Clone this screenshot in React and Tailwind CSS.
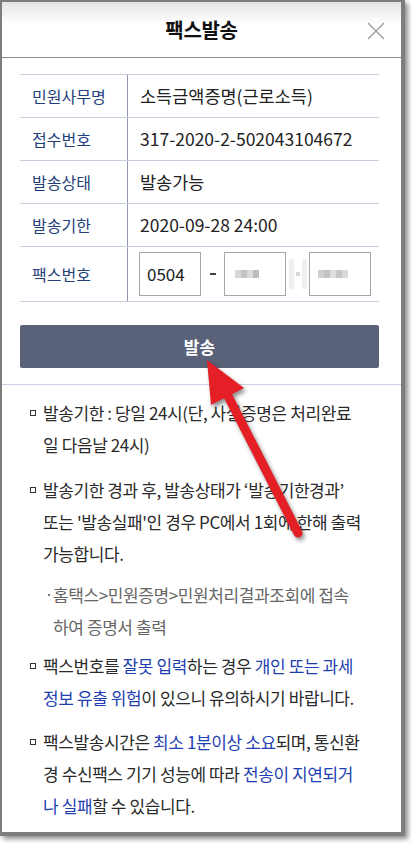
import React from 'react';

const font = { fontFamily: '"Noto Sans CJK KR", "Noto Sans", sans-serif' };

const rows = [
  { label: '민원사무명', value: '소득금액증명(근로소득)' },
  { label: '접수번호', value: '317-2020-2-502043104672' },
  { label: '발송상태', value: '발송가능' },
  { label: '발송기한', value: '2020-09-28 24:00' },
];

// pixelated blur in the masked fax fields
const Mosaic = ({ cells }) => (
  <div className="flex items-center">
    {cells.map((c, i) => (
      <div key={i} className="w-[6px] h-[8px]" style={{ background: c }} />
    ))}
  </div>
);

const Bullet = () => (
  <span className="absolute left-0 top-[13px] w-[6px] h-[6px] border-[1.5px] border-[#333]" />
);

const Blue = ({ children }) => <span className="text-[#1f3fb0]">{children}</span>;

export default function App() {
  return (
    <div className="relative w-[412px] h-[843px] bg-white overflow-hidden" style={font}>
      <div className="w-[405px] h-[836px] border-t-2 border-l-2 border-r-4 border-b-4 border-[#7d7d7d] bg-white shadow-[3px_3px_5px_rgba(0,0,0,0.45)] flex flex-col">
        {/* header */}
        <div className="relative h-[56px] shrink-0 border-b border-[#8a8a8a] bg-gradient-to-b from-[#e4e4e4] to-white to-40% flex items-center justify-center">
          <h1 className="text-[20px] font-bold text-[#111] tracking-[-0.3px]">팩스발송</h1>
          <svg className="absolute left-[365px] top-[20px]" width="18" height="18" viewBox="0 0 18 18">
            <path d="M1 1 L17 17 M17 1 L1 17" stroke="#9a9a9a" strokeWidth="1.3" />
          </svg>
        </div>

        {/* table */}
        <div className="pl-[18px] pt-[16px]">
          <div className="w-[359px] border-t border-[#c8d0e0]">
            {rows.map((r) => (
              <div key={r.label} className="flex h-[43px] border-b border-[#c8d0e0]">
                <div className="w-[108px] shrink-0 border-r border-[#8f97aa] pl-[12px] flex items-center text-[16px] text-[#24407a]">
                  {r.label}
                </div>
                <div className="pl-[12px] flex items-center text-[17.5px] text-[#222]">{r.value}</div>
              </div>
            ))}
            <div className="flex h-[55px] border-b border-[#c8d0e0]">
              <div className="w-[108px] shrink-0 border-r border-[#8f97aa] pl-[12px] flex items-center text-[16px] text-[#24407a]">
                팩스번호
              </div>
              <div className="pl-[11px] flex items-center">
                <div className="w-[62px] h-[44px] border border-[#a6a6ae] flex items-center pl-[7px] text-[17px] text-[#222]">
                  0504
                </div>
                <div className="w-[23px] flex justify-center">
                  <div className="w-[6px] h-[1.5px] bg-[#444]" />
                </div>
                <div className="w-[62px] h-[44px] border border-[#a6a6ae] flex items-center pl-[10px]">
                  <Mosaic cells={['#d6d6d6', '#c4c4c4', '#dadada', '#bdbdbd']} />
                </div>
                <div className="w-[23px] flex justify-center items-center gap-[2px]">
                  <div className="w-[5px] h-[30px] bg-[#f0f0f0]" />
                  <div className="w-[4px] h-[4px] bg-[#d8d8d8]" />
                  <div className="w-[5px] h-[30px] bg-[#f0f0f0]" />
                </div>
                <div className="w-[62px] h-[44px] border border-[#a6a6ae] flex items-center pl-[8px]">
                  <Mosaic cells={['#cfcfcf', '#c2c2c2', '#dedede', '#c6c6c6', '#d9d9d9']} />
                </div>
              </div>
            </div>
          </div>

          <button className="mt-[23px] w-[359px] h-[43px] rounded-[2px] bg-[#596279] text-white text-[17px] font-bold">
            발송
          </button>
        </div>

        <div className="mt-[16px] border-b border-[#c9d1e2]" />

        {/* notes */}
        <div className="pt-[12px] pl-[28px] pr-[20px] text-[17px] leading-[32px] text-[#2a2a2a] tracking-[-0.4px] whitespace-nowrap">
          <div className="relative pl-[13px] mb-[13px]">
            <Bullet />
            발송기한 : 당일 24시(단, 사실증명은 처리완료
            <br />일 다음날 24시)
          </div>
          <div className="relative pl-[13px]">
            <Bullet />
            발송기한 경과 후, 발송상태가 ‘발송기한경과’
            <br />또는 '발송실패'인 경우 PC에서 1회에 한해 출력
            <br />가능합니다.
          </div>
          <div className="relative pl-[23px] mt-[9px] mb-[7px] text-[#666]">
            <span className="absolute left-[18px] top-[15px] w-[2px] h-[2px] bg-[#777]" />
            홈택스&gt;민원증명&gt;민원처리결과조회에 접속
            <br />하여 증명서 출력
          </div>
          <div className="relative pl-[13px] mb-[12px]">
            <Bullet />
            팩스번호를 <Blue>잘못 입력</Blue>하는 경우 <Blue>개인 또는 과세</Blue>
            <br />
            <Blue>정보 유출 위험</Blue>이 있으니 유의하시기 바랍니다.
          </div>
          <div className="relative pl-[13px]">
            <Bullet />
            팩스발송시간은 <Blue>최소 1분이상 소요</Blue>되며, 통신환
            <br />경 수신팩스 기기 성능에 따라 <Blue>전송이 지연되거</Blue>
            <br />
            <Blue>나 실패</Blue>할 수 있습니다.
          </div>
        </div>
      </div>

      {/* red annotation arrow */}
      <svg
        className="absolute left-0 top-0 pointer-events-none drop-shadow-[2px_3px_2px_rgba(0,0,0,0.45)]"
        width="412"
        height="843"
        viewBox="0 0 412 843"
      >
        <line x1="298" y1="533" x2="227" y2="394" stroke="#e41f26" strokeWidth="9" strokeLinecap="round" />
        <polygon points="207,360 244,388 211,405" fill="#e41f26" />
      </svg>
    </div>
  );
}
